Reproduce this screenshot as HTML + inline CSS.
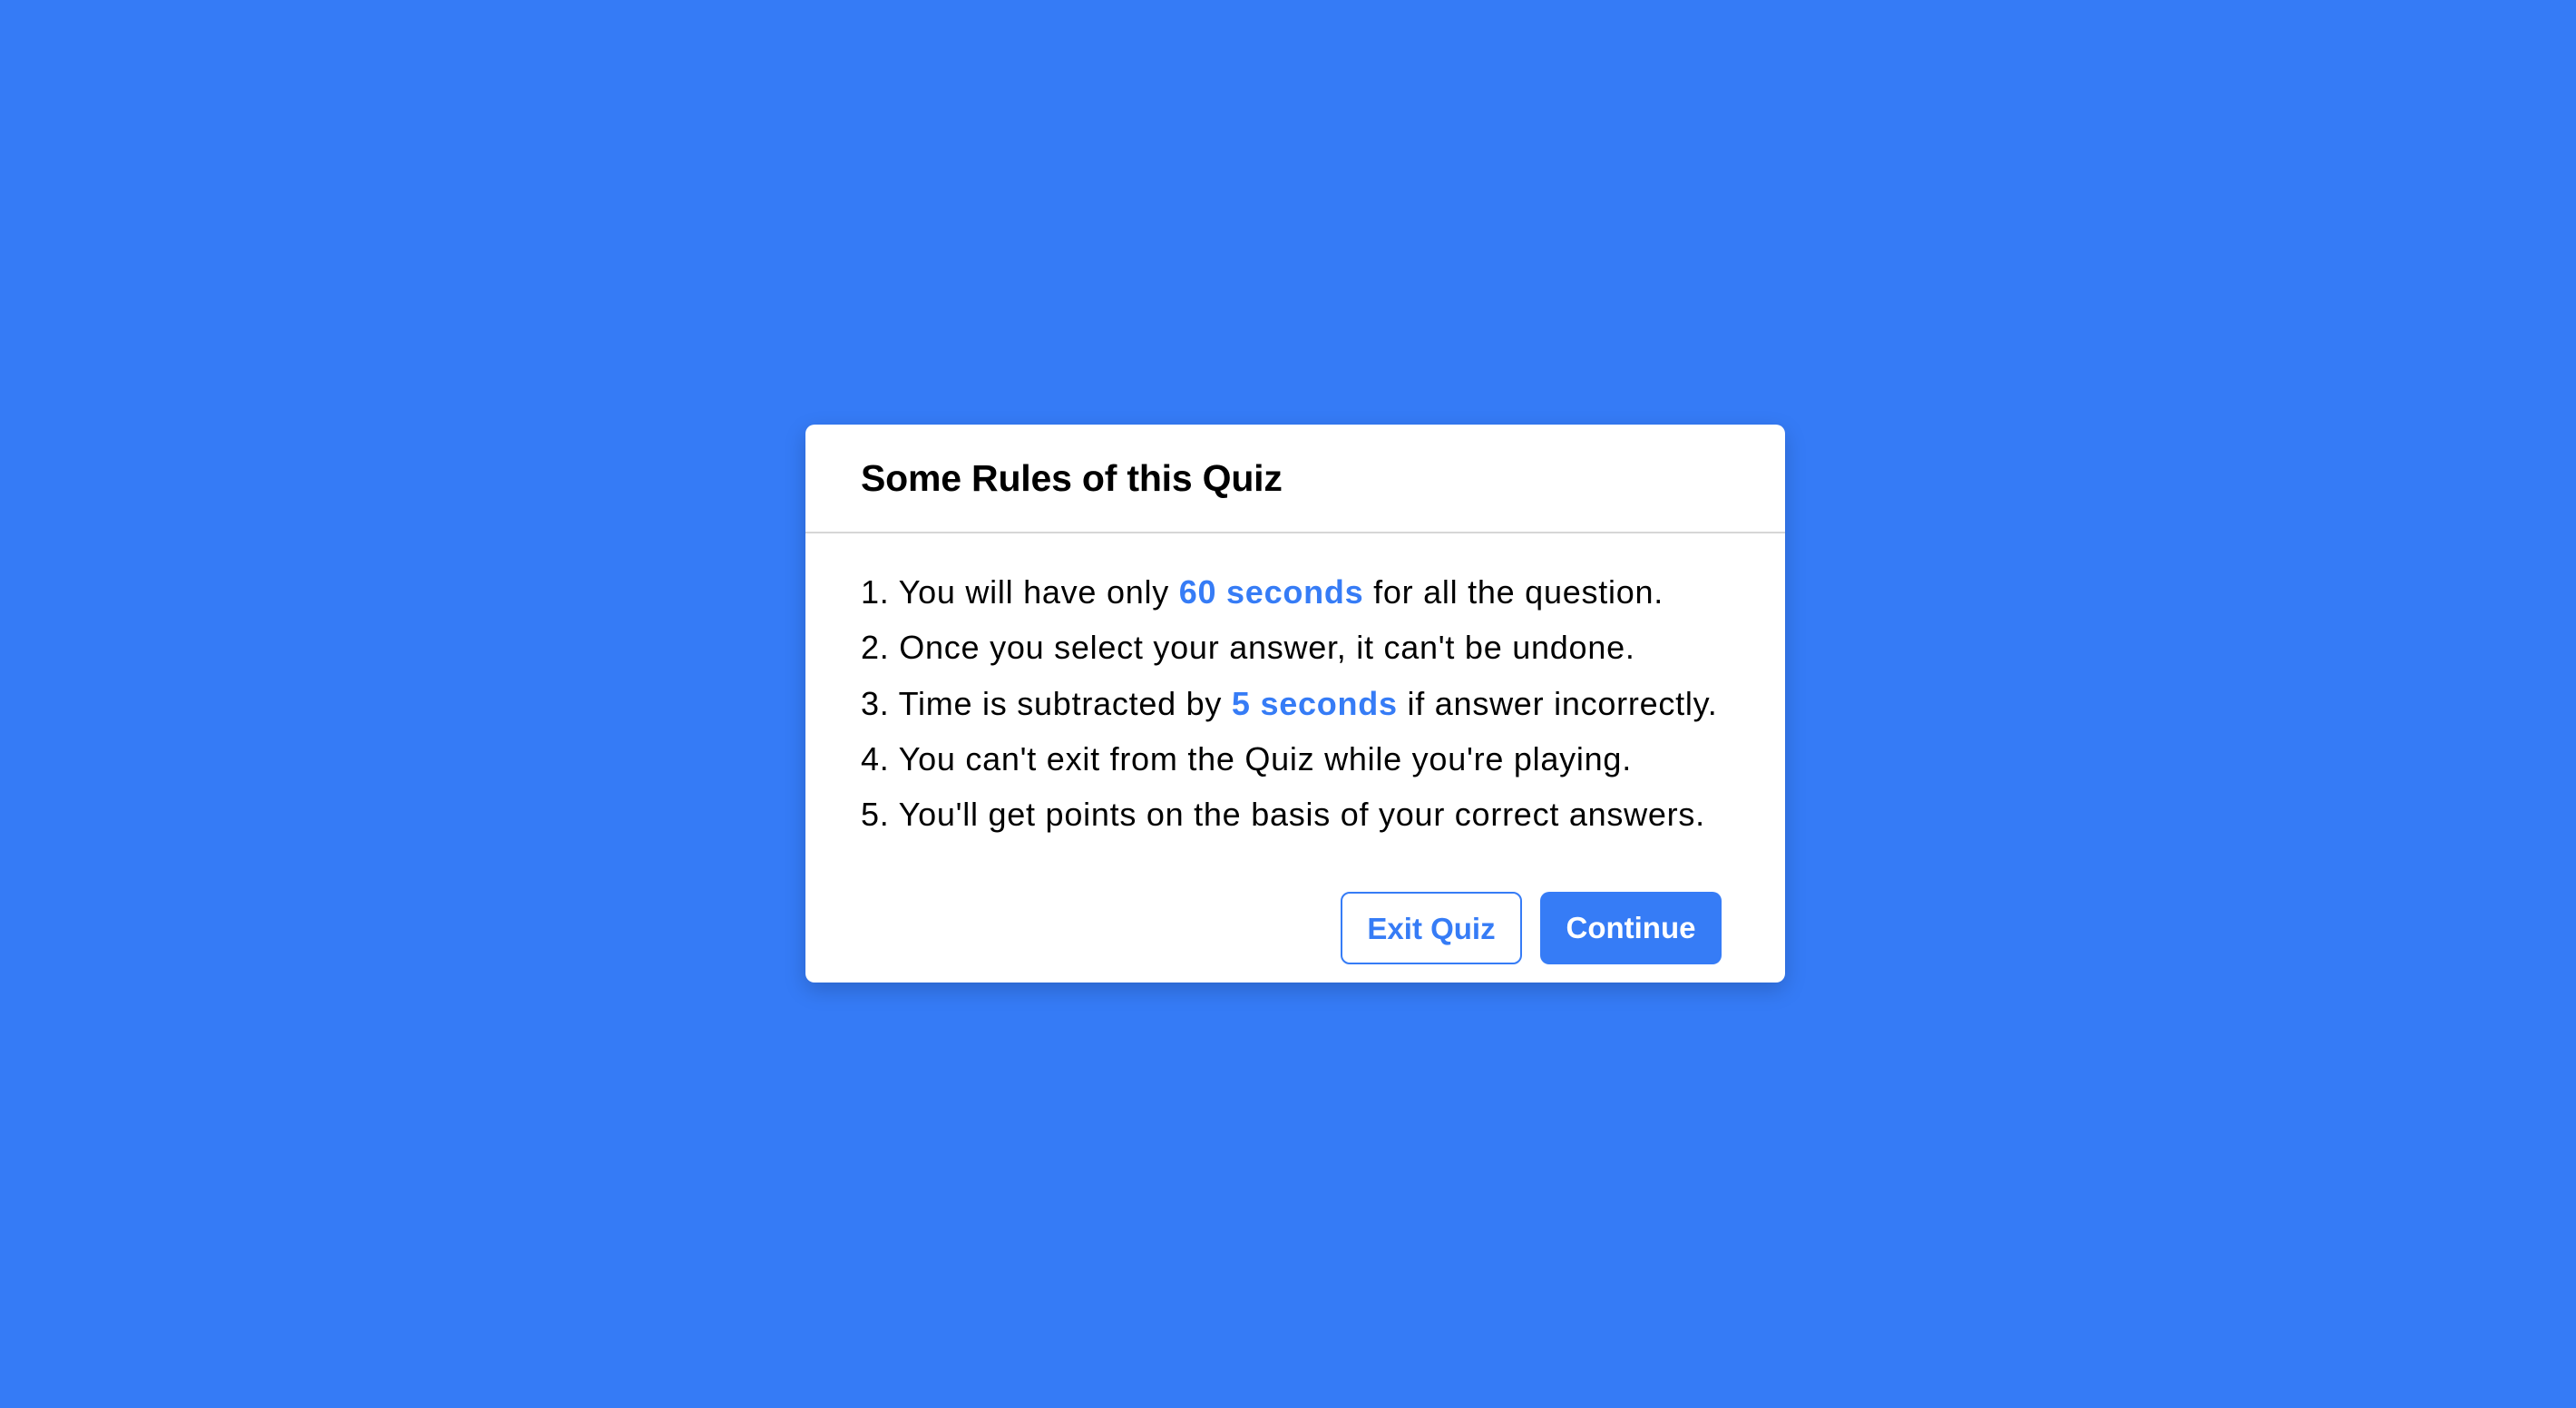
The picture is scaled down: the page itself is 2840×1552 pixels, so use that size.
<!DOCTYPE html>
<html><head><meta charset="utf-8"><style>
html,body{margin:0;padding:0;width:2840px;height:1552px;background:#357bf6;overflow:hidden;font-family:"Liberation Sans",sans-serif;}
.box{position:absolute;left:888px;top:468px;width:1080px;height:615px;background:#fff;border-radius:10px;box-shadow:0 8px 24px rgba(0,0,0,0.18);}
.title{position:absolute;left:61px;top:36px;font-size:41px;font-weight:700;color:#000;letter-spacing:-0.2px;}
.div{position:absolute;left:0;right:0;top:118px;height:2px;background:#d6d6d6;}
.rules{position:absolute;left:61px;top:154px;font-size:36px;color:#000;letter-spacing:0.75px;}
.rules div{height:61.3px;line-height:61px;white-space:nowrap;}
.rules b{color:#367cf6;}
.btn{position:absolute;top:515px;width:200px;height:80px;box-sizing:border-box;border-radius:10px;font-size:33px;font-weight:700;text-align:center;line-height:78px;}
.exit{left:590px;border:2px solid #367cf6;color:#367cf6;background:#fff;}
.cont{left:810px;background:#367cf6;color:#fff;line-height:80px;}
</style></head><body>
<div class="box">
<div class="title">Some Rules of this Quiz</div>
<div class="div"></div>
<div class="rules">
<div>1. You will have only <b>60 seconds</b> for all the question.</div>
<div>2. Once you select your answer, it can't be undone.</div>
<div>3. Time is subtracted by <b>5 seconds</b> if answer incorrectly.</div>
<div>4. You can't exit from the Quiz while you're playing.</div>
<div>5. You'll get points on the basis of your correct answers.</div>
</div>
<div class="btn exit">Exit Quiz</div>
<div class="btn cont">Continue</div>
</div>
</body></html>
